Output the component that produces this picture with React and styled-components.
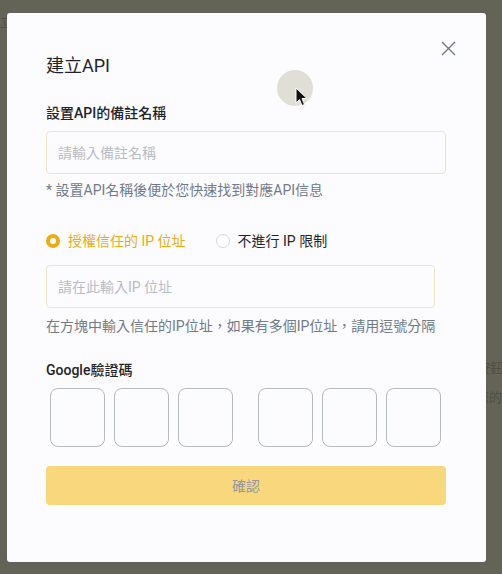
import React, { useState } from "react"
import styled, { createGlobalStyle } from "styled-components"

const GlobalStyle = createGlobalStyle`
    html, body {
        margin: 0;
        padding: 0;
        width: 502px;
        height: 574px;
        overflow: hidden;
        background: #6b6b60;
    }
    * {
        box-sizing: border-box;
    }
    body {
        font-family: "Roboto", "Noto Sans CJK TC", sans-serif;
    }
`

const App = () => {
    const [mode, setMode] = useState("trusted")
    const [note, setNote] = useState("")
    const [ips, setIps] = useState("")
    const [code, setCode] = useState(["", "", "", "", "", ""])

    const handleCode = (i) => (e) => {
        const next = [...code]
        next[i] = e.currentTarget.value.slice(-1)
        setCode(next)
    }

    return (
        <Screen>
            <GlobalStyle />
            <Backdrop>
                <BehindText>建立</BehindText>
                <BehindSide>
                    <span>按鈕</span>
                    <small>您的令</small>
                </BehindSide>
            </Backdrop>
            <Overlay>
                <Modal>
                    <CloseButton aria-label="close">
                        <svg width="15" height="15" viewBox="0 0 15 15">
                            <path d="M1 1 L14 14 M14 1 L1 14" stroke="#707a8a" strokeWidth="1.4" fill="none" />
                        </svg>
                    </CloseButton>
                    <Title>建立API</Title>

                    <Label>設置API的備註名稱</Label>
                    <TextInput
                        value={note}
                        onChange={(e) => setNote(e.currentTarget.value)}
                        placeholder="請輸入備註名稱"
                    />
                    <Hint>* 設置API名稱後便於您快速找到對應API信息</Hint>

                    <RadioRow>
                        <RadioOption $active={mode === "trusted"} onClick={() => setMode("trusted")}>
                            <RadioDot $active={mode === "trusted"} />
                            授權信任的 IP 位址
                        </RadioOption>
                        <RadioOption $active={mode === "none"} onClick={() => setMode("none")}>
                            <RadioDot $active={mode === "none"} />
                            不進行 IP 限制
                        </RadioOption>
                    </RadioRow>
                    <TextInput
                        $narrow
                        value={ips}
                        onChange={(e) => setIps(e.currentTarget.value)}
                        placeholder="請在此輸入IP 位址"
                    />
                    <Hint $gap={9}>在方塊中輸入信任的IP位址，如果有多個IP位址，請用逗號分隔</Hint>

                    <Label $gap={26}>Google驗證碼</Label>
                    <CodeRow>
                        <CodeGroup>
                            {[0, 1, 2].map((i) => (
                                <CodeBox key={i} value={code[i]} onChange={handleCode(i)} />
                            ))}
                        </CodeGroup>
                        <CodeGroup>
                            {[3, 4, 5].map((i) => (
                                <CodeBox key={i} value={code[i]} onChange={handleCode(i)} />
                            ))}
                        </CodeGroup>
                    </CodeRow>

                    <SubmitButton disabled>確認</SubmitButton>
                </Modal>
            </Overlay>
            <Cursor>
                <svg width="14" height="20" viewBox="0 0 14 20">
                    <path d="M1 1 L1 16 L4.5 12.5 L7 18.5 L9.5 17.5 L7 11.5 L12 11.5 Z" fill="#111" stroke="#fff" strokeWidth="1" />
                </svg>
            </Cursor>
        </Screen>
    )
}

const Screen = styled.div`
    position: relative;
    width: 502px;
    height: 574px;
    overflow: hidden;
`

const Backdrop = styled.div`
    position: absolute;
    inset: 0;
    background: #e9e9e2;
    color: #1e2329;
    font-family: "Noto Sans CJK TC", sans-serif;
`

const BehindText = styled.div`
    margin: 12px 0 0 -14px;
    font-size: 14px;
    line-height: 18px;
`

const BehindSide = styled.div`
    display: flex;
    flex-direction: column;
    gap: 12px;
    margin: 328px 0 0 476px;
    font-size: 14px;
    line-height: 18px;
    white-space: nowrap;
    > small {
        font-size: 13px;
    }
`

const Overlay = styled.div`
    position: absolute;
    inset: 0;
    background: rgba(84, 84, 72, 0.9);
    padding: 13px 16px 12px 7px;
`

const Modal = styled.div`
    position: relative;
    width: 479px;
    height: 549px;
    background: #fcfcfe;
    border-radius: 3px;
    padding: 41px 40px 0 39px;
    display: flex;
    flex-direction: column;
    color: #1e2329;
`

const CloseButton = styled.button`
    position: absolute;
    top: 28px;
    right: 30px;
    width: 15px;
    height: 15px;
    padding: 0;
    border: none;
    background: none;
    display: flex;
    cursor: pointer;
`

const Title = styled.h2`
    margin: 0;
    font-size: 18px;
    line-height: 24px;
    font-weight: 400;
    color: #1e2329;
`

const Label = styled.p`
    margin: ${(p) => p.$gap || 26}px 0 9px;
    font-size: 14px;
    line-height: 18px;
    font-weight: 500;
    color: #1e2329;
`

const TextInput = styled.input`
    width: ${(p) => (p.$narrow ? 389 : 400)}px;
    height: 43px;
    padding: 0 11px;
    border: 1px solid #ede6c4;
    border-radius: 4px;
    background: #fcfcfe;
    font: 400 14px/20px "Roboto", "Noto Sans CJK TC", sans-serif;
    color: #1e2329;
    &::placeholder {
        color: #b7bdc6;
    }
    &:focus {
        outline: none;
        border-color: #f0b90b;
    }
`

const Hint = styled.p`
    margin: ${(p) => p.$gap || 7}px 0 0;
    font-size: 14px;
    line-height: 18px;
    color: #707a8a;
    white-space: nowrap;
`

const RadioRow = styled.div`
    display: flex;
    align-items: center;
    gap: 30px;
    height: 20px;
    margin: 32px 0 14px;
`

const RadioOption = styled.label`
    display: flex;
    align-items: center;
    gap: 8px;
    font-size: 14px;
    line-height: 20px;
    color: ${(p) => (p.$active ? "#eeac10" : "#1e2329")};
    cursor: pointer;
`

const RadioDot = styled.span`
    width: 14px;
    height: 14px;
    border-radius: 50%;
    border: ${(p) => (p.$active ? "4px solid #eeac10" : "1px solid #d5d8e0")};
    background: #fff;
`

const CodeRow = styled.div`
    display: flex;
    gap: 25px;
    margin-left: 4px;
`

const CodeGroup = styled.div`
    display: flex;
    gap: 9px;
`

const CodeBox = styled.input`
    width: 55px;
    height: 59px;
    border: 1px solid #b6bcba;
    border-radius: 8px;
    background: transparent;
    text-align: center;
    font: 500 20px "Roboto", sans-serif;
    color: #1e2329;
    &:focus {
        outline: none;
        border-color: #f0b90b;
    }
`

const SubmitButton = styled.button`
    margin-top: 19px;
    width: 400px;
    height: 39px;
    border: none;
    border-radius: 4px;
    background: #f9d77c;
    color: #92979f;
    font: 400 14px/20px "Roboto", "Noto Sans CJK TC", sans-serif;
    cursor: not-allowed;
`

const Cursor = styled.div`
    position: absolute;
    left: 277px;
    top: 70px;
    width: 36px;
    height: 36px;
    border-radius: 50%;
    background: #e0dfd6;
    pointer-events: none;
    > svg {
        position: absolute;
        left: 18px;
        top: 17px;
    }
`

export default App
